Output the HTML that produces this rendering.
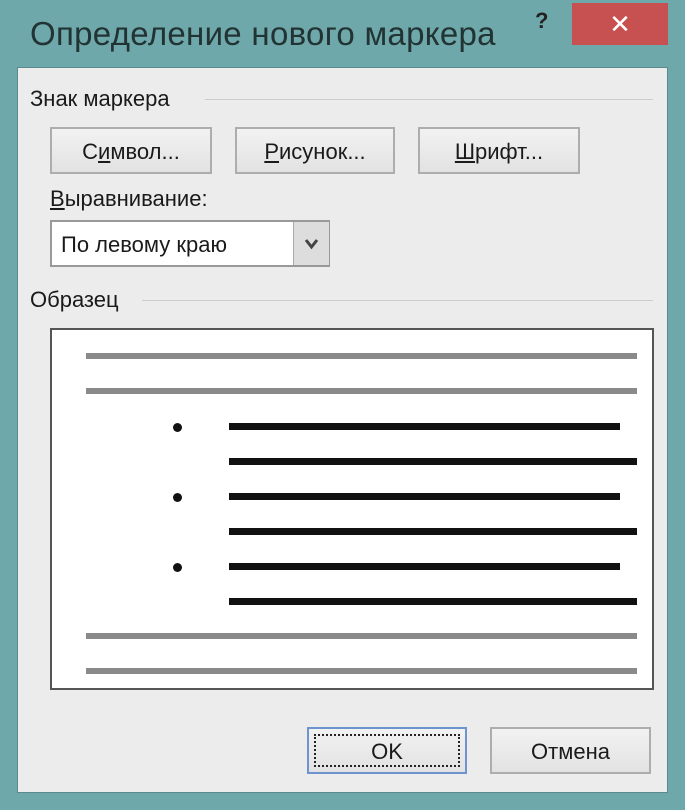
<!DOCTYPE html><html><head><style>
body{margin:0;width:685px;height:810px;background:#6fa8ab;position:relative;overflow:hidden;font-family:"Liberation Sans","DejaVu Sans",sans-serif;color:#1a1a1a}
.a{position:absolute}
.panel{left:17px;top:67px;width:651px;height:726px;background:#ececec;border:1px solid #5a8a8c;box-sizing:border-box}
.btn{background:linear-gradient(#f2f2f2,#e2e2e2);border:2px solid #adadad;box-sizing:border-box;text-align:center;font-size:22px;line-height:45px}
.gl{height:6px;background:#8a8a8a;left:86px;width:551px}
.bl{height:7px;background:#111;left:229px}
.dot{width:9px;height:9px;border-radius:50%;background:#111;left:173px}
u{text-decoration:underline}
</style></head><body>
<div class="a" style="left:30px;top:15px;font-size:33px;color:#233;letter-spacing:0.3px">Определение нового маркера</div>
<div class="a" style="left:535px;top:8px;font-size:22px;font-weight:bold;color:#222">?</div>
<div class="a" style="left:572px;top:3px;width:96px;height:42px;background:#c75050;color:#fff;font-size:26px;text-align:center;line-height:42px">✕</div>
<div class="a panel"></div>
<div class="a" style="left:30px;top:86px;font-size:22px">Знак маркера</div>
<div class="a" style="left:205px;top:99px;width:448px;height:1px;background:#ccc"></div>
<div class="a btn" style="left:50px;top:127px;width:162px;height:47px">С<u>и</u>мвол...</div>
<div class="a btn" style="left:235px;top:127px;width:160px;height:47px"><u>Р</u>исунок...</div>
<div class="a btn" style="left:418px;top:127px;width:162px;height:47px"><u>Ш</u>рифт...</div>
<div class="a" style="left:50px;top:186px;font-size:22px"><u>В</u>ыравнивание:</div>
<div class="a" style="left:50px;top:220px;width:280px;height:47px;background:#fff;border:2px solid #999;box-sizing:border-box;font-size:22px;line-height:45px;padding-left:9px">По левому краю</div>
<div class="a" style="left:293px;top:222px;width:35px;height:43px;background:#ddd;border-left:1px solid #aaa"><svg width="35" height="43"><path d="M12 18 L17.5 25 L23 18" fill="none" stroke="#444" stroke-width="3"/></svg></div>
<div class="a" style="left:30px;top:287px;font-size:22px">Образец</div>
<div class="a" style="left:142px;top:300px;width:511px;height:1px;background:#ccc"></div>
<div class="a" style="left:50px;top:328px;width:604px;height:362px;background:#fff;border:2px solid #555;box-sizing:border-box"></div>
<div class="a gl" style="top:353px"></div>
<div class="a gl" style="top:388px"></div>
<div class="a dot" style="top:423px"></div><div class="a bl" style="top:423px;width:391px"></div><div class="a bl" style="top:458px;width:408px"></div>
<div class="a dot" style="top:493px"></div><div class="a bl" style="top:493px;width:391px"></div><div class="a bl" style="top:528px;width:408px"></div>
<div class="a dot" style="top:563px"></div><div class="a bl" style="top:563px;width:391px"></div><div class="a bl" style="top:598px;width:408px"></div>
<div class="a gl" style="top:633px"></div>
<div class="a gl" style="top:668px"></div>
<div class="a btn" style="left:307px;top:727px;width:160px;height:47px;border-color:#6e94d0"><div style="position:absolute;left:5px;top:5px;right:5px;bottom:5px;border:2px dotted #222"></div><span style="position:relative">OK</span></div>
<div class="a btn" style="left:490px;top:727px;width:161px;height:47px">Отмена</div>
</body></html>
